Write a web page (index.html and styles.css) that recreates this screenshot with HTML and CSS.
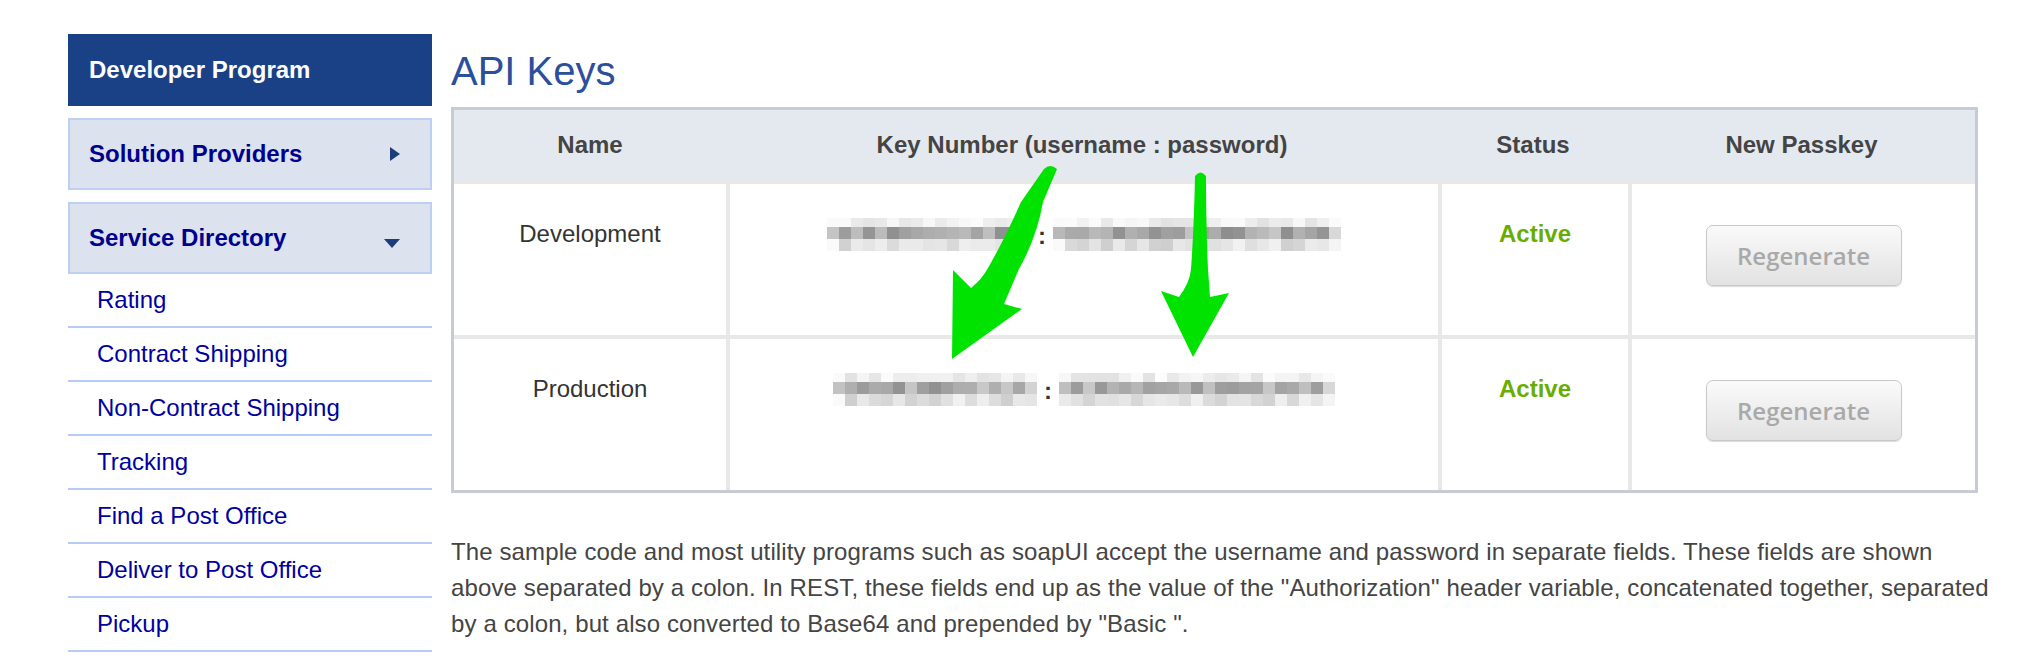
FILE: index.html
```html
<!DOCTYPE html>
<html lang="en">

<head>
    <meta charset="UTF-8">
    <meta name="viewport" content="width=device-width, initial-scale=1.0">
    <title>API Keys</title>
    <link rel="stylesheet" href="styles.css">
</head>

<body>
<div class="page">

    <div class="sidebar">
        <div class="side-title">Developer Program</div>
        <div class="side-head">Solution Providers <span class="tri-right"></span></div>
        <div class="side-head">Service Directory <span class="tri-down"></span></div>
        <ul class="side-list">
            <li><a href="#">Rating</a></li>
            <li><a href="#">Contract Shipping</a></li>
            <li><a href="#">Non-Contract Shipping</a></li>
            <li><a href="#">Tracking</a></li>
            <li><a href="#">Find a Post Office</a></li>
            <li><a href="#">Deliver to Post Office</a></li>
            <li><a href="#">Pickup</a></li>
        </ul>
    </div>

    <div class="content">
        <h1>API Keys</h1>

        <div class="table-wrap">
            <table class="keys">
                <tr>
                    <th class="c-name">Name</th>
                    <th class="c-key">Key Number (username : password)</th>
                    <th class="c-status">Status</th>
                    <th class="c-pass">New Passkey</th>
                </tr>
                <tr>
                    <td>Development</td>
                    <td>
                        <div class="key">
                            <div class="blur" data-cols="17" data-seed="11"></div>
                            <span class="colon">:</span>
                            <div class="blur" data-cols="24" data-seed="29"></div>
                        </div>
                    </td>
                    <td class="active">Active</td>
                    <td><button class="regen" disabled>Regenerate</button></td>
                </tr>
                <tr>
                    <td>Production</td>
                    <td>
                        <div class="key">
                            <div class="blur" data-cols="17" data-seed="53"></div>
                            <span class="colon">:</span>
                            <div class="blur" data-cols="23" data-seed="71"></div>
                        </div>
                    </td>
                    <td class="active">Active</td>
                    <td><button class="regen" disabled>Regenerate</button></td>
                </tr>
            </table>

            <!-- green arrows drawn over the table -->
            <svg class="arrows" width="1527" height="385" viewBox="0 0 1527 385">
                <path d="M593,62 Q599,56 606,62 L592,95 Q586,130 568,162 L553,197 L571,202 L501,252 L502,163 L520,181 Q531,172 537,161 Q553,133 570,95 Z" />
                <path d="M744,69 Q749.5,62 755,69 Q755,120 757,162 L759,190 L778,186 L742,250 L710,184 L728,190 Q739,175 740,162 Q743,120 744,69 Z" />
            </svg>
        </div>

        <p class="note">The sample code and most utility programs such as soapUI accept the username and password in separate fields. These fields are shown above separated by a colon. In REST, these fields end up as the value of the "Authorization" header variable, concatenated together, separated by a colon, but also converted to Base64 and prepended by "Basic ".</p>
    </div>

</div>

<script>
    // pixelated (blurred out) key values
    function seeded(seed) {
        var s = seed;
        return function () {
            s = (s * 9301 + 49297) % 233280;
            return s / 233280;
        }
    }

    var rows = [[226, 252], [142, 200], [206, 242]];
    var blurs = document.querySelectorAll('.blur');
    for (var b = 0; b < blurs.length; b++) {
        var el = blurs[b];
        var cols = parseInt(el.dataset.cols, 10);
        var rnd = seeded(parseInt(el.dataset.seed, 10));
        el.style.gridTemplateColumns = 'repeat(' + cols + ', 12px)';
        for (var r = 0; r < rows.length; r++) {
            for (var c = 0; c < cols; c++) {
                var lo = rows[r][0], hi = rows[r][1];
                var v = Math.round(lo + rnd() * (hi - lo));
                if (c == 0 || c == cols - 1) v = Math.min(250, v + 20);
                var cell = document.createElement('span');
                cell.style.background = 'rgb(' + v + ',' + v + ',' + v + ')';
                el.appendChild(cell);
            }
        }
    }
</script>
</body>

</html>
```

FILE: styles.css
```css
body {
    margin: 0;
    font-family: "Liberation Sans", Arial, sans-serif;
    background-color: #fff;
}

.page {
    display: flex;
    gap: 19px;
    padding: 34px 0 0 68px;
}

/* sidebar */

.sidebar {
    flex: none;
    width: 364px;
}

.side-title {
    display: flex;
    align-items: center;
    height: 72px;
    padding-left: 21px;
    background: #1a4086;
    color: #fff;
    font-size: 24px;
    font-weight: bold;
}

.side-head {
    display: flex;
    align-items: center;
    justify-content: space-between;
    box-sizing: border-box;
    height: 72px;
    margin-top: 12px;
    padding: 0 30px 0 19px;
    border: 2px solid #bdd0f3;
    background: #dde3ee;
    color: #00008e;
    font-size: 24px;
    font-weight: bold;
}

.tri-right {
    width: 0;
    height: 0;
    border-left: 10px solid #1d3c7c;
    border-top: 7px solid transparent;
    border-bottom: 7px solid transparent;
}

.tri-down {
    width: 0;
    height: 0;
    margin-top: 10px;
    border-top: 9px solid #1d3c7c;
    border-left: 8px solid transparent;
    border-right: 8px solid transparent;
}

.side-list {
    list-style: none;
    margin: 0;
    padding: 0;
}

.side-list li {
    display: flex;
    align-items: center;
    box-sizing: border-box;
    height: 54px;
    padding-left: 29px;
    border-bottom: 2px solid #b6ccf5;
    font-size: 24px;
}

.side-list a {
    color: #0000a0;
    text-decoration: none;
}

/* content */

.content {
    width: 1527px;
}

h1 {
    margin: 14px 0 13px;
    font-size: 40px;
    line-height: 46px;
    font-weight: normal;
    color: #2c4f9b;
}

.table-wrap {
    position: relative;
}

.keys {
    width: 1527px;
    table-layout: fixed;
    border-collapse: separate;
    border-spacing: 0;
    border: 3px solid #c7ccd4;
}

.keys th {
    height: 70px;
    padding: 0;
    background: #e4e9f0;
    color: #444;
    font-size: 24px;
    font-weight: bold;
}

.c-name {
    width: 272px;
}

.c-key {
    width: 712px;
}

.c-status {
    width: 190px;
}

.c-pass {
    width: 347px;
}

.keys td {
    height: 116px;
    padding: 35px 0 0;
    vertical-align: top;
    text-align: center;
    border-top: 4px solid #e8e8e8;
    color: #333;
    font-size: 24px;
    line-height: 30px;
}

.keys td + td {
    border-left: 4px solid #e8e8e8;
}

.keys td.active {
    color: #68ad00;
    font-weight: bold;
}

.key {
    display: flex;
    justify-content: center;
    align-items: center;
    height: 33px;
    margin-top: -1px;
}

.blur {
    display: grid;
    grid-template-rows: 9px 12px 12px;
}

.colon {
    margin: 3px 7px 0;
    font-size: 24px;
    line-height: 22px;
    font-weight: bold;
    color: #333;
}

.regen {
    width: 196px;
    height: 61px;
    margin-top: 6px;
    border: 1px solid #c9c9c9;
    border-radius: 7px;
    background: linear-gradient(#fafafa, #e2e2e2);
    box-shadow: 0 1px 1px rgba(0, 0, 0, 0.15);
    color: #a9a9a9;
    font-family: "Open Sans", sans-serif;
    font-size: 24px;
    font-weight: 600;
}

.arrows {
    position: absolute;
    left: 0;
    top: 0;
    pointer-events: none;
}

.arrows path {
    fill: #00e300;
}

.note {
    width: 1540px;
    margin: 41px 0 0;
    color: #444;
    font-size: 24px;
    letter-spacing: 0.12px;
    line-height: 36px;
}
```
